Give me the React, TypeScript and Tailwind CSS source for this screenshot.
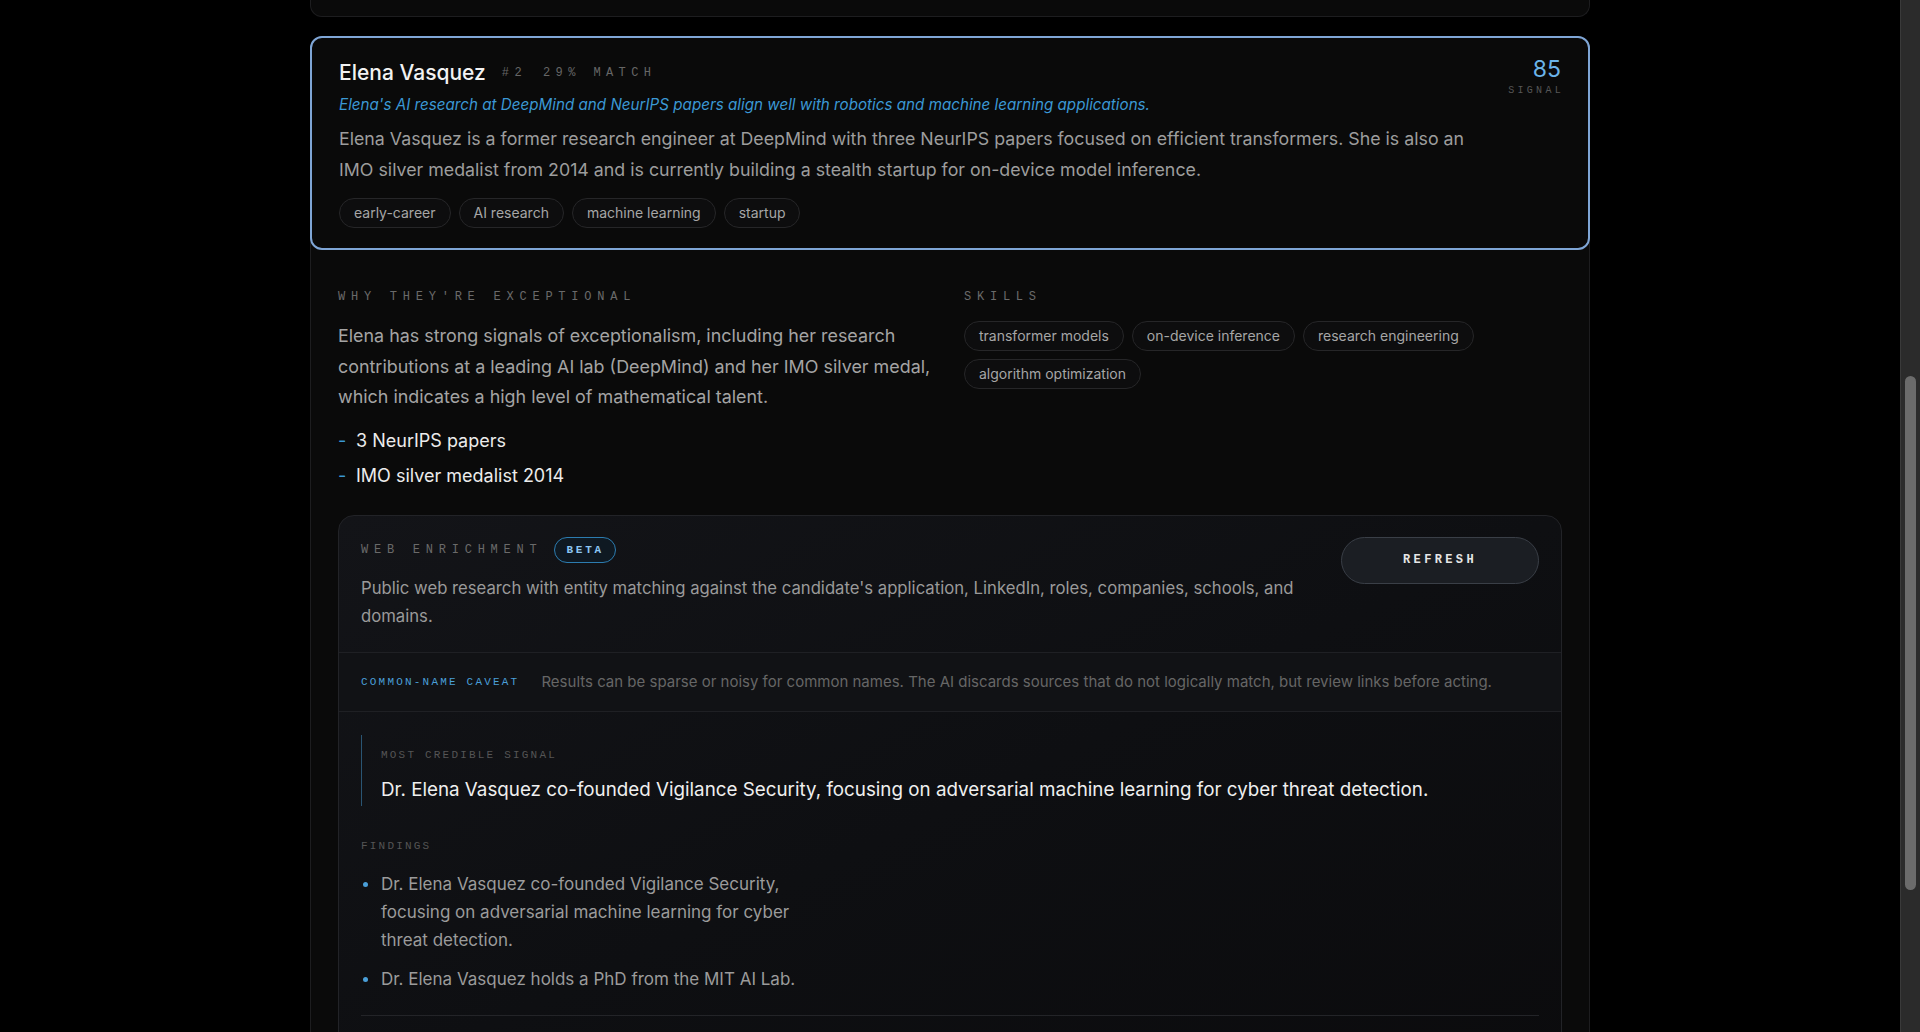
import React from 'react';

const mono = "font-['Liberation_Mono','DejaVu_Sans_Mono',monospace]";

const headerTags = ['early-career', 'AI research', 'machine learning', 'startup'];
const skills = ['transformer models', 'on-device inference', 'research engineering', 'algorithm optimization'];
const highlights = ['3 NeurIPS papers', 'IMO silver medalist 2014'];
const findings = [
  'Dr. Elena Vasquez co-founded Vigilance Security, focusing on adversarial machine learning for cyber threat detection.',
  'Dr. Elena Vasquez holds a PhD from the MIT AI Lab.',
];

function Pill({ label }: { label: string }) {
  return (
    <span className="rounded-full border border-[#262628] bg-[#0d0d0e] px-[14px] py-[4px] text-[14px] leading-5 text-[#a6a6a6]">
      {label}
    </span>
  );
}

function SectionLabel({ children, className = '' }: { children: React.ReactNode; className?: string }) {
  return (
    <div className={`${mono} text-[12px] leading-4 uppercase tracking-[0.48em] text-[#6a6a6a] ${className}`}>
      {children}
    </div>
  );
}

function SmallLabel({ children, className = '' }: { children: React.ReactNode; className?: string }) {
  return (
    <div className={`${mono} text-[11px] leading-4 uppercase tracking-[0.2em] ${className}`}>{children}</div>
  );
}

function CandidateHeader() {
  return (
    <div className="-m-px rounded-xl border-2 border-[#7fa6d6] bg-[#0a0a0a] px-[27px] pb-5 pt-[21px]">
      <div className="flex gap-6">
        <div className="min-w-0 flex-1">
          <div className="flex items-center gap-4">
            <h2 className="text-[21px] font-medium leading-[28px] text-[#f2f2f2]">Elena Vasquez</h2>
            <span className={`${mono} text-[12px] tracking-[0.45em] text-[#666]`}>#2</span>
            <span className={`${mono} text-[12px] tracking-[0.45em] text-[#666]`}>29% MATCH</span>
          </div>
          <p className="mt-2 text-[15.2px] italic leading-5 text-[#3b98d4]">
            Elena's AI research at DeepMind and NeurIPS papers align well with robotics and machine learning applications.
          </p>
          <p className="mt-2 text-[17.8px] leading-[31px] text-[#9d9d9d]">
            Elena Vasquez is a former research engineer at DeepMind with three NeurIPS papers focused on efficient
            transformers. She is also an IMO silver medalist from 2014 and is currently building a stealth startup for
            on-device model inference.
          </p>
          <div className="mt-[13px] flex flex-wrap gap-2">
            {headerTags.map((t) => (
              <Pill key={t} label={t} />
            ))}
          </div>
        </div>
        <div className="-mt-[3px] flex flex-col items-end">
          <span className="text-[23px] leading-[26px] text-[#6bb4ea]">85</span>
          <span className={`${mono} -mr-[3px] mt-[3px] text-[10px] leading-3 tracking-[0.33em] text-[#575757]`}>SIGNAL</span>
        </div>
      </div>
    </div>
  );
}

function WebEnrichment() {
  return (
    <div className="mt-[25px] overflow-hidden rounded-2xl border border-[#222327] bg-gradient-to-br from-[#131418] via-[#0e0f12] to-[#0b0b0d]">
      <div className="flex items-start justify-between gap-8 px-[22px] pb-[22px] pt-[21px]">
        <div className="min-w-0 flex-1">
          <div className="flex h-[27px] items-center gap-3">
            <SectionLabel>Web Enrichment</SectionLabel>
            <span
              className={`${mono} flex h-[26px] items-center rounded-full border border-[#2c7cb0] bg-[#0f1922] px-[11px] text-[11px] font-bold tracking-[0.25em] text-[#8cc6f2]`}
            >
              BETA
            </span>
          </div>
          <p className="mt-[10px] text-[16.7px] leading-[28px] text-[#9a9a9a]">
            Public web research with entity matching against the candidate's application, LinkedIn, roles, companies,
            schools, and domains.
          </p>
        </div>
        <button
          className={`${mono} h-[47px] w-[198px] shrink-0 rounded-full border border-[#3a3f47] bg-[#1b1e23] text-[12px] font-bold tracking-[0.28em] text-[#e6e6e6]`}
        >
          REFRESH
        </button>
      </div>

      <div className="flex items-center gap-[22px] border-y border-[#1f2024] bg-[#111215] px-[22px] py-[21px]">
        <SmallLabel className="shrink-0 text-[#4a9fd8]">Common-name caveat</SmallLabel>
        <p className="text-[15px] leading-4 text-[#666]">
          Results can be sparse or noisy for common names. The AI discards sources that do not logically match, but
          review links before acting.
        </p>
      </div>

      <div className="px-[22px] pb-10 pt-[23px]">
        <div className="border-l border-[#2a5573] pb-[2px] pl-[19px] pt-3">
          <SmallLabel className="text-[#555]">Most credible signal</SmallLabel>
          <p className="mt-[13px] text-[18.8px] leading-[28px] text-[#efefef]">
            Dr. Elena Vasquez co-founded Vigilance Security, focusing on adversarial machine learning for cyber threat
            detection.
          </p>
        </div>

        <SmallLabel className="mt-8 text-[#555]">Findings</SmallLabel>
        <ul className="mt-4 flex max-w-[448px] flex-col gap-[11px]">
          {findings.map((f) => (
            <li key={f} className="flex">
              <span className="flex w-5 shrink-0 pl-[2px] pt-[12px]">
                <span className="h-[5px] w-[5px] rounded-full bg-[#4a9fd8]" />
              </span>
              <span className="text-[17px] leading-[28px] text-[#9b9b9b]">{f}</span>
            </li>
          ))}
        </ul>

        <div className="mt-[22px] h-10 border-t border-[#232428]" />
      </div>
    </div>
  );
}

export default function App() {
  return (
    <div className="flex h-[1032px] w-full overflow-hidden bg-black font-['Inter','Noto_Sans',sans-serif]">
      <main className="min-w-0 flex-1">
        <div className="mx-auto max-w-[1280px]">
          {/* tail of the previous candidate card */}
          <div className="h-[17px] rounded-b-xl border-x border-b border-[#1d1d1f] bg-[#0a0a0a]" />

          <article className="mt-[19px] rounded-xl border border-[#1d1d1f] bg-[#0a0a0a]">
            <CandidateHeader />

            <div className="px-[27px] pb-10 pt-[40px]">
              <div className="grid grid-cols-2 gap-x-[28px]">
                <div>
                  <SectionLabel>Why they're exceptional</SectionLabel>
                  <p className="mt-4 text-[17.9px] leading-[30.5px] text-[#a4a4a4]">
                    Elena has strong signals of exceptionalism, including her research contributions at a leading AI
                    lab (DeepMind) and her IMO silver medal, which indicates a high level of mathematical talent.
                  </p>
                  <ul className="mt-[14px] flex flex-col gap-[7px]">
                    {highlights.map((h) => (
                      <li key={h} className="flex text-[18px] leading-[28px]">
                        <span className="w-[18px] shrink-0 text-[#3b98d4]">-</span>
                        <span className="text-[#ececec]">{h}</span>
                      </li>
                    ))}
                  </ul>
                </div>
                <div>
                  <SectionLabel>Skills</SectionLabel>
                  <div className="mt-[16px] flex flex-wrap gap-x-2 gap-y-2">
                    {skills.map((s) => (
                      <Pill key={s} label={s} />
                    ))}
                  </div>
                </div>
              </div>

              <WebEnrichment />
            </div>
          </article>
        </div>
      </main>

      {/* scrollbar */}
      <div className="flex w-5 shrink-0 flex-col items-center border-l border-[#3a3a3a] bg-[#2b2b2b] pt-[376px]">
        <div className="h-[514px] w-[11px] rounded-full bg-[#6b6b6b]" />
      </div>
    </div>
  );
}
